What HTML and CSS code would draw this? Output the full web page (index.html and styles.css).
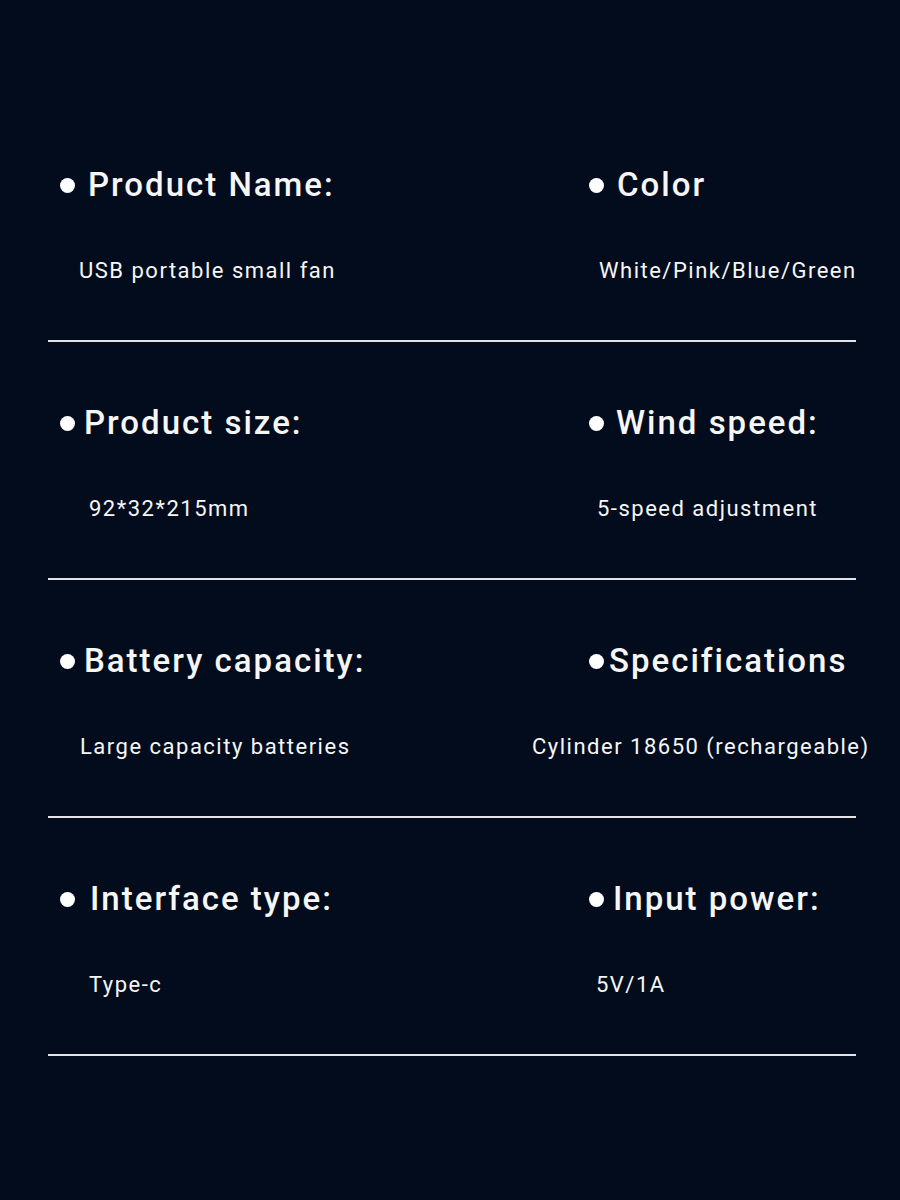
FILE: index.html
```html
<!DOCTYPE html>
<html lang="en">
<head>
  <meta charset="UTF-8" />
  <title>USB portable small fan - Specifications</title>
  <link rel="stylesheet" href="styles.css">
</head>
<body>

  <main class="specs">
    <section class="spec-row">
      <div class="spec spec--name">
        <h2 class="spec-title"><span class="dot"></span>Product Name:</h2>
        <p class="spec-value">USB portable small fan</p>
      </div>
      <div class="spec spec--color">
        <h2 class="spec-title"><span class="dot"></span>Color</h2>
        <p class="spec-value">White/Pink/Blue/Green</p>
      </div>
    </section>

    <section class="spec-row">
      <div class="spec spec--size">
        <h2 class="spec-title"><span class="dot"></span>Product size:</h2>
        <p class="spec-value">92*32*215mm</p>
      </div>
      <div class="spec spec--wind">
        <h2 class="spec-title"><span class="dot"></span>Wind speed:</h2>
        <p class="spec-value">5-speed adjustment</p>
      </div>
    </section>

    <section class="spec-row">
      <div class="spec spec--battery">
        <h2 class="spec-title"><span class="dot"></span>Battery capacity:</h2>
        <p class="spec-value">Large capacity batteries</p>
      </div>
      <div class="spec spec--specs">
        <h2 class="spec-title"><span class="dot"></span>Specifications</h2>
        <p class="spec-value">Cylinder 18650 (rechargeable)</p>
      </div>
    </section>

    <section class="spec-row">
      <div class="spec spec--interface">
        <h2 class="spec-title"><span class="dot"></span>Interface type:</h2>
        <p class="spec-value">Type-c</p>
      </div>
      <div class="spec spec--power">
        <h2 class="spec-title"><span class="dot"></span>Input power:</h2>
        <p class="spec-value">5V/1A</p>
      </div>
    </section>
  </main>

</body>
</html>
```

FILE: styles.css
```css
* { box-sizing: border-box; }

body {
  margin: 0;
  min-height: 1200px;
  background: #030c1d;
  color: #f6f6f6;
  font-family: Roboto, "Liberation Sans", sans-serif;
}

.specs {
  width: 808px;
  margin-left: 48px;
  padding-top: 104px;
}

.spec-row {
  display: grid;
  grid-template-columns: 528px 1fr;
  height: 238px;
  border-bottom: 2px solid #e4e4e6;
}

.spec {
  padding-top: 61px;
  padding-left: 12px;
}

.spec-title {
  display: flex;
  align-items: center;
  gap: 13px;
  margin: 0;
  font-size: 33px;
  font-weight: 500;
  line-height: 40px;
  letter-spacing: 2px;
  white-space: nowrap;
}

.dot {
  flex: none;
  width: 15px;
  height: 15px;
  margin-top: 1px;
  border-radius: 50%;
  background: #fff;
}

.spec-value {
  margin: 52px 0 0;
  padding-left: 19px;
  font-size: 22px;
  font-weight: 400;
  line-height: 28px;
  letter-spacing: 1.5px;
  white-space: nowrap;
}

/* ajustes por columna */
.spec--size .spec-title,
.spec--battery .spec-title { gap: 9px; }
.spec--interface .spec-title { gap: 15px; }

.spec--size .spec-value,
.spec--interface .spec-value { padding-left: 29px; }
.spec--battery .spec-value { padding-left: 20px; }

.spec--color,
.spec--wind,
.spec--specs,
.spec--power { padding-left: 13px; }

.spec--wind .spec-title { gap: 12px; }
.spec--specs .spec-title { gap: 5px; }
.spec--power .spec-title { gap: 9px; }

.spec--color .spec-value { padding-left: 10px; }
.spec--wind .spec-value { padding-left: 8px; }
.spec--power .spec-value { padding-left: 7px; }
.spec--specs .spec-value { padding-left: 0; margin-left: -57px; }
```
